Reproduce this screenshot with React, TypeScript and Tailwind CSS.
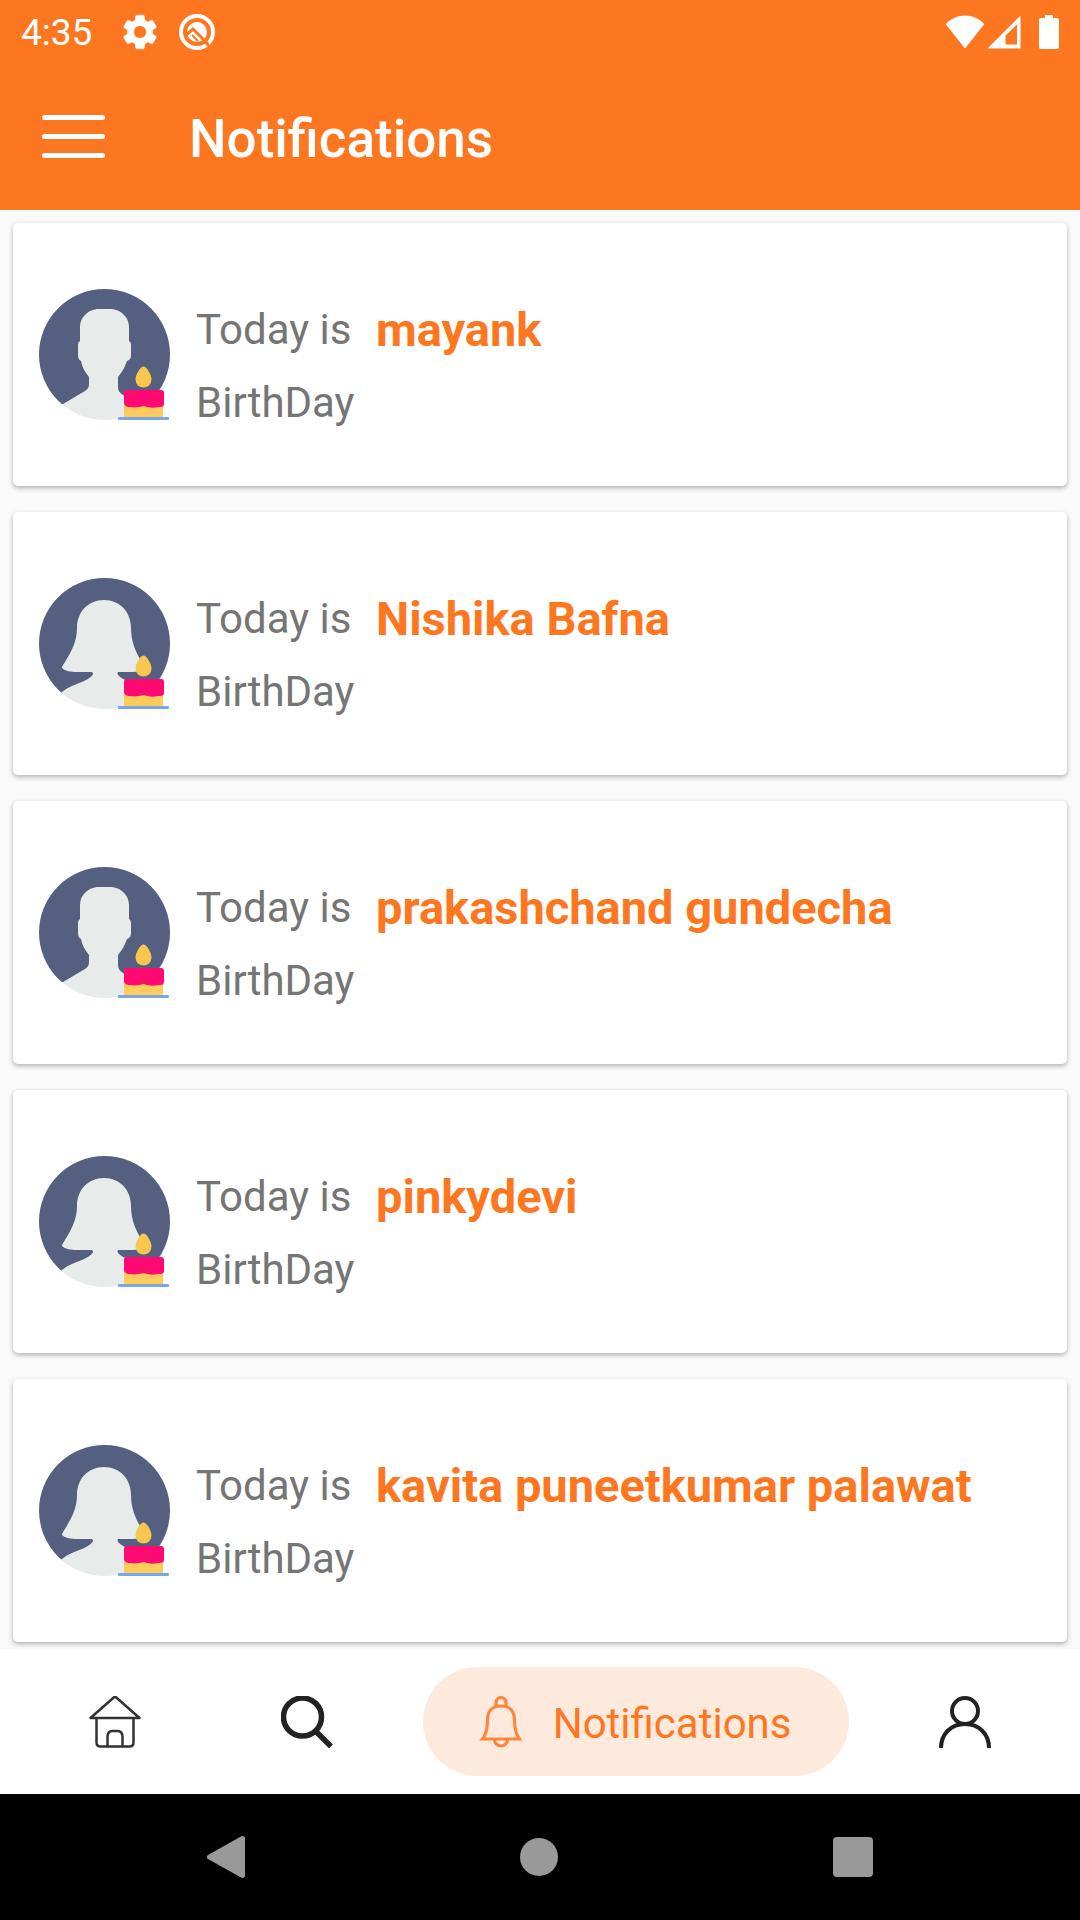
import React, { useState } from 'react';

interface Birthday {
  id: number;
  name: string;
  gender: 'male' | 'female';
}

const birthdays: Birthday[] = [
  { id: 1, name: 'mayank', gender: 'male' },
  { id: 2, name: 'Nishika Bafna', gender: 'female' },
  { id: 3, name: 'prakashchand gundecha', gender: 'male' },
  { id: 4, name: 'pinkydevi', gender: 'female' },
  { id: 5, name: 'kavita puneetkumar palawat', gender: 'female' },
];

const StatusBar: React.FC = () => (
  <div className="flex h-[63px] items-center justify-between px-[21px]">
    <div className="flex items-center">
      <span className="w-[72px] pt-0.5 text-[37px] leading-[63px]">4:35</span>
      <svg className="ml-[26px] h-[42px] w-[42px]" viewBox="0 0 24 24" fill="currentColor" stroke="currentColor" strokeWidth="0.3">
        <path d="M19.14 12.94c.04-.3.06-.61.06-.94 0-.32-.02-.64-.07-.94l2.03-1.58c.18-.14.23-.41.12-.61l-1.92-3.32c-.12-.22-.37-.29-.59-.22l-2.39.96c-.5-.38-1.03-.7-1.62-.94l-.36-2.54c-.04-.24-.24-.41-.48-.41h-3.84c-.24 0-.43.17-.47.41l-.36 2.54c-.59.24-1.13.57-1.62.94l-2.39-.96c-.22-.08-.47 0-.59.22L2.74 8.87c-.12.21-.08.47.12.61l2.03 1.58c-.05.3-.09.63-.09.94s.02.64.07.94l-2.03 1.58c-.18.14-.23.41-.12.61l1.92 3.32c.12.22.37.29.59.22l2.39-.96c.5.38 1.03.7 1.62.94l.36 2.54c.05.24.24.41.48.41h3.84c.24 0 .44-.17.47-.41l.36-2.54c.59-.24 1.13-.56 1.62-.94l2.39.96c.22.08.47 0 .59-.22l1.92-3.32c.12-.22.07-.47-.12-.61l-2.01-1.58zM12 15.6c-1.98 0-3.6-1.62-3.6-3.6s1.620-3.600 3.600-3.600 3.600 1.620 3.600 3.600-1.620 3.600-3.600 3.600z" />
      </svg>
      <svg className="ml-[18px] h-9 w-9" viewBox="0 0 36 36" fill="none">
        <circle cx="18" cy="18" r="16" stroke="currentColor" strokeWidth="4" />
        <circle cx="18" cy="18" r="10" fill="currentColor" />
        <path d="M7 21l7-6 15 15" stroke="#fd7721" strokeWidth="3" />
        <path d="M13 21l6 6" stroke="#fd7721" strokeWidth="2" />
        <path d="M26 28l4 4" stroke="#fd7721" strokeWidth="2.500" />
      </svg>
    </div>
    <div className="flex items-center">
      <svg className="h-[34px] w-10" viewBox="0 0 40 34" fill="currentColor">
        <path d="M20 33.500L.8 9.200C6 3.500 12.500.6 20 .6s14 2.900 19.200 8.600z" />
      </svg>
      <svg className="ml-0.5 h-[34px] w-[34px]" viewBox="0 0 34 34" fill="currentColor">
        <path fillRule="evenodd" d="M.5 33.500L33.500.5v33zM18.500 29.500h11.500V9.500L18.500 20.500z" />
      </svg>
      <svg className="ml-[18px] h-[34px] w-5" viewBox="0 0 20 34" fill="currentColor">
        <path d="M6 0h8v3h4a2 2 0 0 1 2 2v27a2 2 0 0 1-2 2H2a2 2 0 0 1-2-2V5a2 2 0 0 1 2-2h4z" />
      </svg>
    </div>
  </div>
);

const Avatar: React.FC<{ gender: Birthday['gender'] }> = ({ gender }) => (
  <svg className="h-[131px] w-[131px] shrink-0" viewBox="0 0 131 131">
    <defs>
      <clipPath id="avatar-circle">
        <circle cx="65.5" cy="65.5" r="65.5" />
      </clipPath>
    </defs>
    <g clipPath="url(#avatar-circle)">
      <path d="M0 0h131v131H85L23 115 0 131z" fill="#556080" />
      {gender === 'male' ? (
        <path
          fill="#e7eceb"
          d="M58 20h15c9 1 17 8 17 18v14c2 1 2 3 2 6v8c0 3-1 5-4 6-2 6-5 11-9 16v10c0 4 2 6 5 8l28 14v17H10v-10l14-12 22-13c3-2 4-4 4-7V88c-4-5-7-10-8-16-2-1-3-3-3-6v-8c0-3 0-5 2-6V38c0-10 8-17 17-18z"
        />
      ) : (
        <path
          fill="#e7eceb"
          d="M65 22c16 0 27 12 27 28 0 14 5 25 12 36 2 2 3 4 3 5-3 2-8 3-14 3H80c-2 0-2 2 0 4 4 4 10 5 16 8l16 8v20H10v-12l13-8c6-5 14-8 20-10 6-3 10-5 11-8 0-2-1-2-3-2H38c-6 0-12-1-15-4 0-2 1-3 3-6 6-10 12-20 12-34 0-16 11-28 27-28z"
        />
      )}
    </g>
    {/* birthday cake badge */}
    <path d="M104.500 77.500c3 0 8 8 8 13a8 8 0 0 1-16 0c0-5 5-13 8-13z" fill="#f9c74f" />
    <rect x="85" y="114" width="39" height="14" fill="#ffcc5b" />
    <path d="M87 101h35c2 0 3 1 3 3v11c0 3-3 3-6 3-5 1-9 1-14-1-5 1-9 2-14 1-4 0-6-2-6-4v-10c0-2 1-3 2-3z" fill="#ff0a72" />
    <rect x="79" y="128" width="51" height="3" rx="1" fill="#7aa5e6" />
  </svg>
);

const BirthdayCard: React.FC<{ birthday: Birthday }> = ({ birthday }) => (
  <li className="flex h-[263px] items-center rounded-[5px] bg-white pl-[26px] shadow-[0_2px_5px_rgba(0,0,0,0.3)]">
    <Avatar gender={birthday.gender} />
    <p className="ml-[26px] grid grid-cols-[180px_1fr] pt-[22px] text-[42px] leading-[73px] text-[#757575]">
      <span>Today is</span>
      <strong className="text-[47px] font-bold whitespace-nowrap text-[#fd7721]">{birthday.name}</strong>
      <span>BirthDay</span>
    </p>
  </li>
);

const tabs = [
  {
    id: 'home',
    label: 'Home',
    icon: (
      <svg className="h-[52px] w-[52px]" viewBox="0 0 52 52" fill="none" stroke="#333333" strokeWidth="2.5" strokeLinejoin="round">
        <path d="M25 1.200h2L50.500 22H1.500z" />
        <path d="M7.500 22V46.500q0 4 4 4h29q4 0 4-4V22" />
        <path d="M18.500 50.500V41q0-6 5-6h5q5 0 5 6v9.500" />
      </svg>
    ),
  },
  {
    id: 'search',
    label: 'Search',
    icon: (
      <svg className="h-[52px] w-[52px]" viewBox="0 0 52 52" fill="none" stroke="currentColor" strokeWidth="5.5">
        <circle cx="21.500" cy="21" r="19" />
        <path d="M34.500 35L50 50.500" />
      </svg>
    ),
  },
  {
    id: 'notifications',
    label: 'Notifications',
    icon: (
      <svg className="h-[52px] w-[52px]" viewBox="0 0 52 52" fill="none" stroke="currentColor" strokeOpacity="0.85" strokeWidth="3.2">
        <path d="M21 10V6.500a5 5 0 0 1 10 0V10" />
        <path d="M7.500 43c4-5 5-11 5-19 0-9 5-14 13.500-14s13.500 5 13.500 14c0 8 1 14 5 19z" />
        <path d="M19.500 43.500a6.500 6.500 0 0 0 13 0" />
      </svg>
    ),
  },
  {
    id: 'profile',
    label: 'Profile',
    icon: (
      <svg className="h-[52px] w-[52px]" viewBox="0 0 52 52" fill="none" stroke="currentColor" strokeWidth="4">
        <circle cx="26" cy="15" r="13" />
        <path d="M2 52C2 38 12 28 26 28s24 10 24 24" />
      </svg>
    ),
  },
];

const BottomTabs: React.FC = () => {
  const [active, setActive] = useState('notifications');

  return (
    <nav className="relative flex h-[145px] items-center justify-evenly bg-white">
      {tabs.map(tab =>
        tab.id === active ? (
          <button
            key={tab.id}
            type="button"
            className="flex h-[109px] items-center gap-[26px] rounded-full bg-[#feeadd] pr-[58px] pl-[52px] text-[#fd7721]"
          >
            {tab.icon}
            <span className="pt-1 text-[42px] leading-[52px]">{tab.label}</span>
          </button>
        ) : (
          <button
            key={tab.id}
            type="button"
            aria-label={tab.label}
            onClick={() => setActive(tab.id)}
            className="flex h-[109px] w-[154px] items-center justify-center text-[#222222]"
          >
            {tab.icon}
          </button>
        )
      )}
    </nav>
  );
};

const SystemNav: React.FC = () => (
  <div className="flex h-[126px] items-center justify-around bg-black px-[70px] text-[#999999]">
    <button type="button" aria-label="Back">
      <svg className="h-[42px] w-[38px]" viewBox="0 0 38 42" fill="currentColor">
        <path d="M1 19L34 .5c2-1 4 0 4 2v37c0 2-2 3-4 2L1 23c-1.500-1-1.500-3 0-4z" />
      </svg>
    </button>
    <button type="button" aria-label="Home" className="h-[38px] w-[38px] rounded-full bg-current" />
    <button type="button" aria-label="Recent apps" className="h-10 w-10 rounded-[4px] bg-current" />
  </div>
);

const App: React.FC = () => {
  return (
    <div className="flex min-h-screen flex-col bg-[#fafafa] font-['Roboto',sans-serif]">
      <header className="bg-[#fd7721] text-white">
        <StatusBar />
        <div className="flex h-[147px] items-center gap-[84px] pl-[42px]">
          <button type="button" aria-label="Open menu" className="flex flex-col gap-[14px]">
            <span className="h-[5px] w-[63px] rounded-full bg-white" />
            <span className="h-[5px] w-[63px] rounded-full bg-white" />
            <span className="h-[5px] w-[63px] rounded-full bg-white" />
          </button>
          <h1 className="pt-1 text-[53px] leading-[64px] font-medium">Notifications</h1>
        </div>
      </header>

      <main className="grow px-[13px] pt-[13px] pb-[7px]">
        <ul className="flex flex-col gap-[26px]">
          {birthdays.map(birthday => (
            <BirthdayCard key={birthday.id} birthday={birthday} />
          ))}
        </ul>
      </main>

      <BottomTabs />
      <SystemNav />
    </div>
  );
};

export default App;
